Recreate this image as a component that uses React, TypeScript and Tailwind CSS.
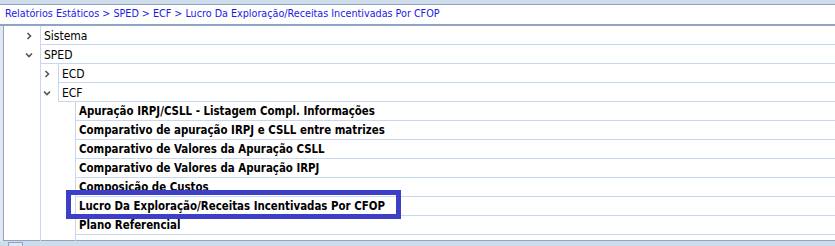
import { ReactNode } from 'react';

const FONT = { fontFamily: "'DejaVu Sans Condensed', 'DejaVu Sans', sans-serif" };

const reports = [
  'Apuração IRPJ/CSLL - Listagem Compl. Informações',
  'Comparativo de apuração IRPJ e CSLL entre matrizes',
  'Comparativo de Valores da Apuração CSLL',
  'Comparativo de Valores da Apuração IRPJ',
  'Composição de Custos',
  'Lucro Da Exploração/Receitas Incentivadas Por CFOP',
  'Plano Referencial',
];

function Chevron({ open }: { open?: boolean }) {
  return (
    <svg width="8" height="8" viewBox="0 0 8 8" className="shrink-0">
      {open ? (
        <path d="M1 2.5 L4 5.5 L7 2.5" fill="none" stroke="#555" strokeWidth="1.6" />
      ) : (
        <path d="M2.5 1 L5.5 4 L2.5 7" fill="none" stroke="#555" strokeWidth="1.6" />
      )}
    </svg>
  );
}

function Node({ indent, open, children }: { indent: number; open?: boolean; children: ReactNode }) {
  return (
    <div className="flex h-[19px]">
      <div className="shrink-0 flex items-center justify-end pr-[7px] pt-[1px]" style={{ width: indent }}>
        <Chevron open={open} />
      </div>
      <div className="flex-1 flex items-center border-l border-b border-[#c6d7ef] pl-[3px] pt-[2px] text-[12px] text-black">
        {children}
      </div>
    </div>
  );
}

export default function App() {
  return (
    <div className="w-[835px] h-[246px] bg-[#cfdcec] flex flex-col overflow-hidden" style={FONT}>
      <div className="h-[5px] shrink-0 border-b border-[#8ea4c0]" />
      <div className="h-[21px] shrink-0 bg-white flex items-center pl-[5px] text-[10.7px] text-[#1a1ae6] border-b-2 border-[#8ea4c0]">
        Relatórios Estáticos &gt; SPED &gt; ECF &gt; Lucro Da Exploração/Receitas Incentivadas Por CFOP
      </div>
      <div className="flex flex-1 min-h-0">
        <div className="w-[3px] shrink-0 bg-[#e3e8ef]" />
        <div className="flex-1 bg-white border-l border-b border-[#8ea4c0] flex flex-col">
          <Node indent={36}>Sistema</Node>
          <Node indent={36} open>
            SPED
          </Node>
          <div className="flex flex-1 flex-col pl-[36px]">
            <div className="flex-1 border-l border-[#c6d7ef]">
              <Node indent={17}>ECD</Node>
              <Node indent={17} open>
                ECF
              </Node>
              <div className="h-[139px] pl-[34px]">
                <div className="h-full border-l border-[#c6d7ef]">
                  {reports.map((r) => (
                    <div
                      key={r}
                      className="relative h-[19px] flex items-center border-b border-[#c6d7ef] pl-[3px] pt-[2px] text-[11.4px] font-bold text-black"
                    >
                      {r}
                      {r.startsWith('Lucro') && (
                        <div className="absolute left-[-10px] top-[-7px] w-[335px] h-[29px] border-[5px] border-[#3d3fc6]" />
                      )}
                    </div>
                  ))}
                </div>
              </div>
            </div>
          </div>
        </div>
      </div>
      <div className="h-[5px] shrink-0 flex pl-[8px] pt-[1px]">
        <div className="w-[15px] h-[4px] border-t border-l border-r border-[#8ea4c0] bg-[#dfe7f2]" />
      </div>
    </div>
  );
}
